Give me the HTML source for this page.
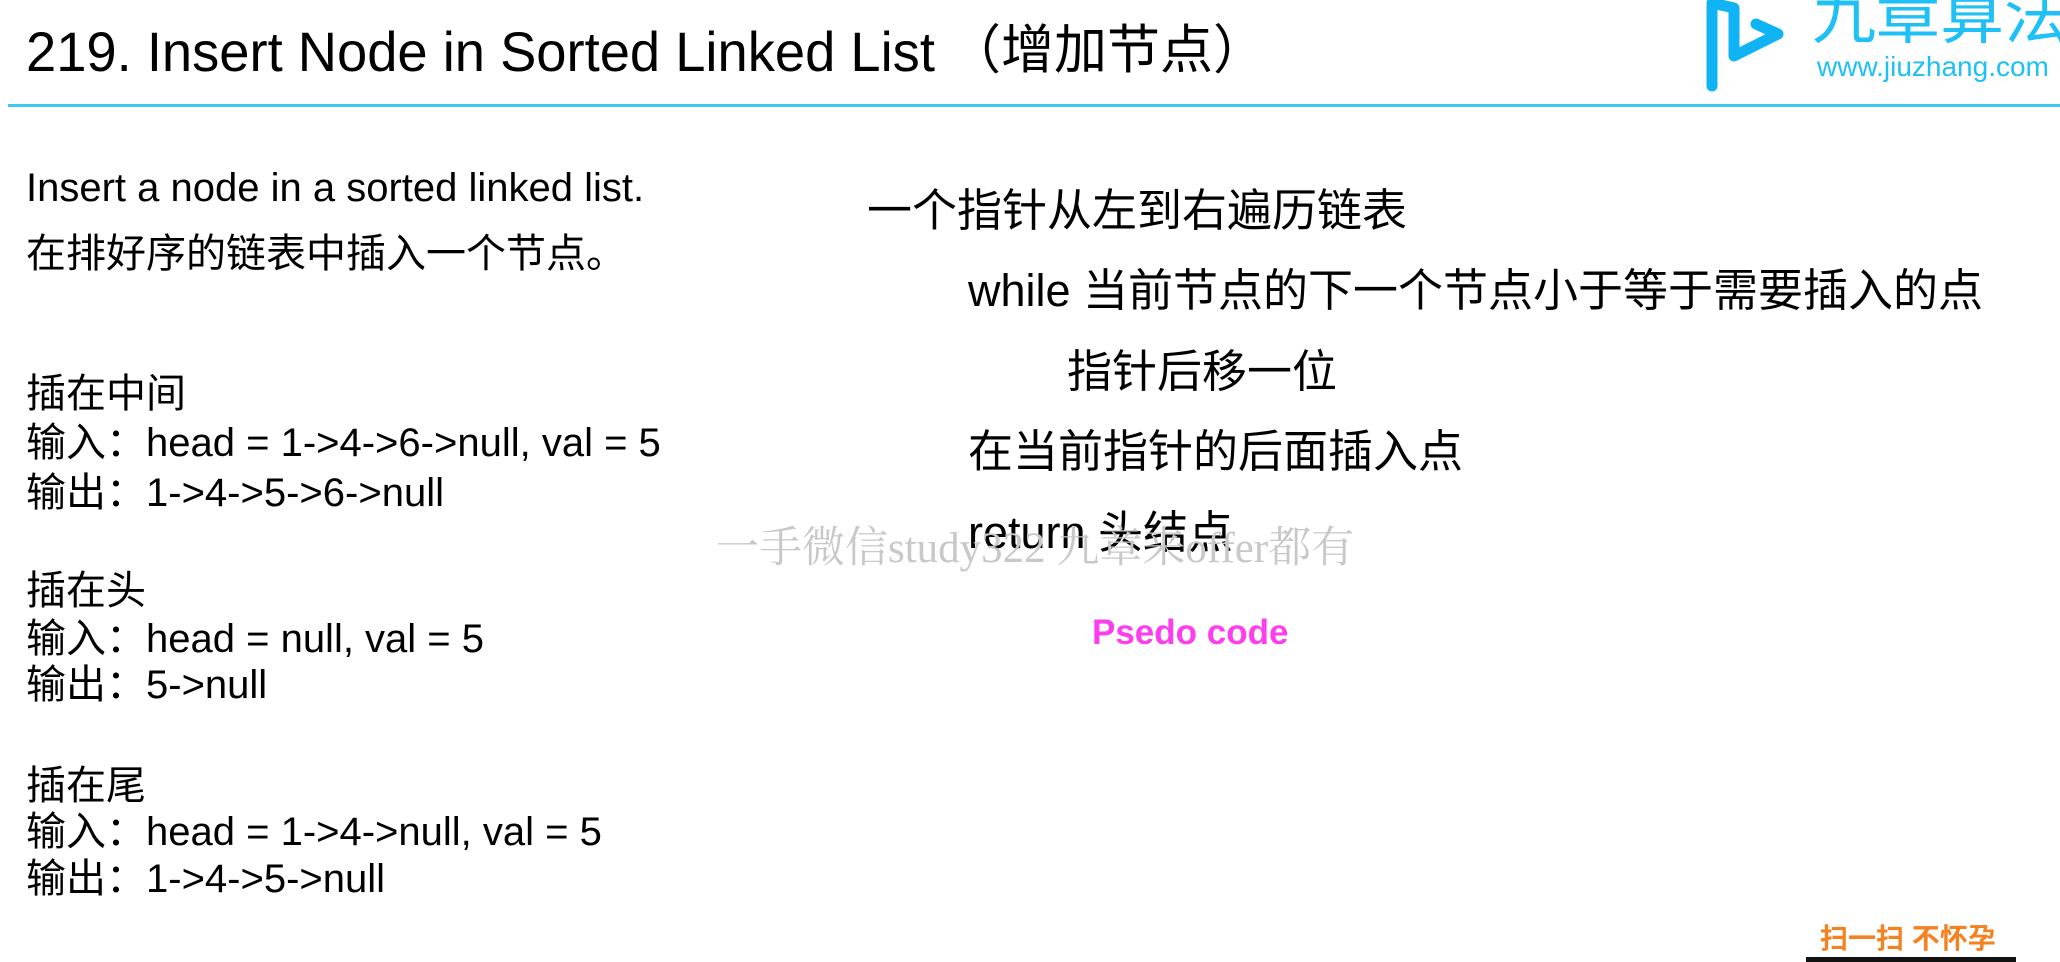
<!DOCTYPE html>
<html><head><meta charset="utf-8"><style>
html,body{margin:0;padding:0;background:#fff;}
body{width:2060px;height:962px;position:relative;overflow:hidden;font-family:"Liberation Sans","Noto Sans CJK SC",sans-serif;color:#000;}
.t{position:absolute;white-space:nowrap;line-height:1;transform-origin:left center;}
</style></head><body>
<div class="t" style="left:26px;top:24px;font-size:56px;transform:scaleX(0.97)">219. Insert Node in Sorted Linked List</div>
<div class="t" style="left:948px;top:24px;font-size:53px;">（增加节点）</div>
<div style="position:absolute;left:8px;top:104px;width:2052px;height:3px;background:#3cc8f0"></div>

<svg style="position:absolute;left:1700px;top:0" width="360" height="92" viewBox="0 0 360 92">
<path d="M12 86 V3 L34 8 V56 L78 34 L56 24" fill="none" stroke="#10b4f5" stroke-width="11" stroke-linecap="round" stroke-linejoin="round"/>
<text x="112" y="38" font-family="Noto Sans CJK SC,sans-serif" font-size="64" fill="#1ec0f5">九章算法</text>
<text x="117" y="76" font-family="Liberation Sans,sans-serif" font-size="28" fill="#1ec0f5">www.jiuzhang.com</text>
</svg>

<div class="t" style="left:26px;top:168px;font-size:40px;">Insert a node in a sorted linked list.</div>
<div class="t" style="left:26px;top:234px;font-size:40px;">在排好序的链表中插入一个节点。</div>

<div class="t" style="left:26px;top:374px;font-size:40px;">插在中间</div>
<div class="t" style="left:26px;top:423px;font-size:40px;">输入：head = 1-&gt;4-&gt;6-&gt;null, val = 5</div>
<div class="t" style="left:26px;top:473px;font-size:40px;">输出：1-&gt;4-&gt;5-&gt;6-&gt;null</div>
<div class="t" style="left:26px;top:571px;font-size:40px;">插在头</div>
<div class="t" style="left:26px;top:619px;font-size:40px;">输入：head = null, val = 5</div>
<div class="t" style="left:26px;top:665px;font-size:40px;">输出：5-&gt;null</div>
<div class="t" style="left:26px;top:766px;font-size:40px;">插在尾</div>
<div class="t" style="left:26px;top:812px;font-size:40px;">输入：head = 1-&gt;4-&gt;null, val = 5</div>
<div class="t" style="left:26px;top:859px;font-size:40px;">输出：1-&gt;4-&gt;5-&gt;null</div>

<div class="t" style="left:867px;top:188px;font-size:45px;">一个指针从左到右遍历链表</div>
<div class="t" style="left:968px;top:268px;font-size:45px;">while 当前节点的下一个节点小于等于需要插入的点</div>
<div class="t" style="left:1067px;top:349px;font-size:45px;">指针后移一位</div>
<div class="t" style="left:968px;top:429px;font-size:45px;">在当前指针的后面插入点</div>
<div class="t" style="left:968px;top:510px;font-size:45px;">return 头结点</div>
<div class="t" style="left:716px;top:527px;font-size:43px;color:#c8c8c8;font-family:'Liberation Serif','Noto Serif CJK SC',serif;">一手微信study322 九章来offer都有</div>
<div class="t" style="left:1092px;top:615px;font-size:35px;font-weight:bold;color:#ff3cf0;">Psedo code</div>

<div class="t" style="left:1820px;top:925px;font-size:28px;font-weight:bold;color:#f58220;">扫一扫 不怀孕</div>
<div style="position:absolute;left:1806px;top:957px;width:210px;height:5px;background:#111"></div>
</body></html>
